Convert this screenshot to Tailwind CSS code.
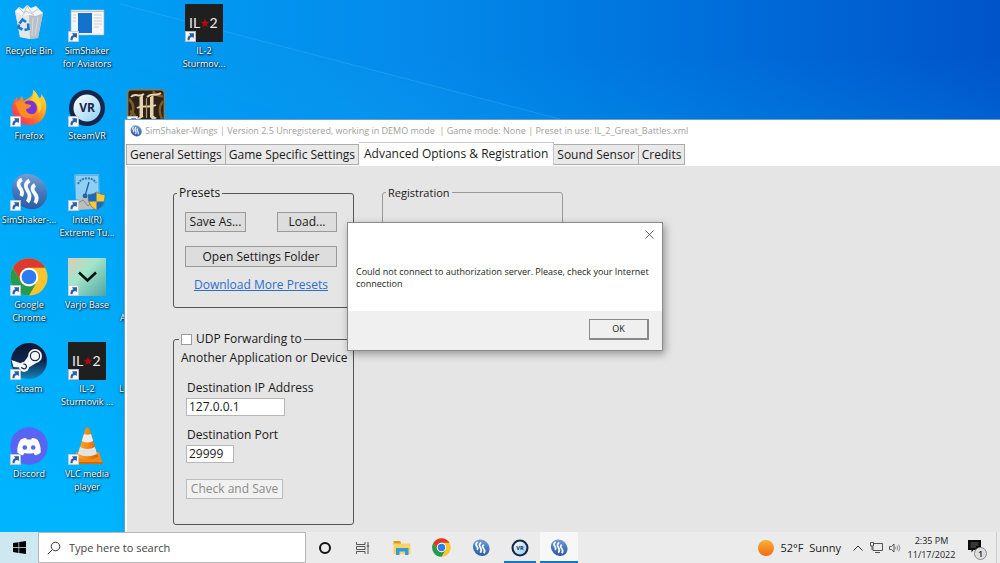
<!DOCTYPE html>
<html lang="en">
<head>
    <meta charset="UTF-8">
    <meta name="viewport" content="width=device-width, initial-scale=1.0">
    <title>SimShaker-Wings</title>
    <script src="https://cdn.jsdelivr.net/npm/@tailwindcss/browser@4"></script>
    <style>
        body {
            font-family: 'Open Sans', 'Noto Sans', sans-serif;
        }
        /* Desktop labels need a dark halo to stay readable on the wallpaper */
        .desktop-label {
            text-shadow: 1px 1px 2px #000, 0 0 2px rgba(0, 0, 0, .7);
        }
    </style>
</head>
<body class="relative h-screen overflow-hidden bg-[#00b0fb] text-[#1a1a1a] flex flex-col">

    <!-- Shared icons -->
    <svg class="absolute w-0 h-0" aria-hidden="true">
        <defs>
            <linearGradient id="g-ball" x1="0" y1="0" x2="1" y2="1">
                <stop offset="0" stop-color="#86aede"/><stop offset=".5" stop-color="#4678bd"/><stop offset="1" stop-color="#244e94"/>
            </linearGradient>
            <linearGradient id="g-fox" x1="1" y1="0" x2="0" y2="1">
                <stop offset="0" stop-color="#fff04a"/><stop offset=".35" stop-color="#ffab1f"/><stop offset=".65" stop-color="#ff5b35"/><stop offset="1" stop-color="#e3228c"/>
            </linearGradient>
            <linearGradient id="g-steam" x1="0" y1="0" x2="0" y2="1">
                <stop offset="0" stop-color="#10152e"/><stop offset=".5" stop-color="#0e2650"/><stop offset="1" stop-color="#1486ba"/>
            </linearGradient>
            <linearGradient id="g-varjo" x1="0" y1="0" x2="1" y2="1">
                <stop offset="0" stop-color="#dccbb6"/><stop offset=".4" stop-color="#a3e6ca"/><stop offset="1" stop-color="#4fa5a4"/>
            </linearGradient>
            <linearGradient id="g-sun" x1="0" y1="0" x2="0" y2="1">
                <stop offset="0" stop-color="#fbb034"/><stop offset="1" stop-color="#f26a12"/>
            </linearGradient>
            <linearGradient id="g-cone" x1="0" y1="0" x2="1" y2="0">
                <stop offset="0" stop-color="#ffa63a"/><stop offset=".5" stop-color="#f78a12"/><stop offset="1" stop-color="#d95f04"/>
            </linearGradient>
            <linearGradient id="g-vr" x1="0" y1="0" x2="1" y2="1">
                <stop offset="0" stop-color="#fff"/><stop offset="1" stop-color="#8fd0f6"/>
            </linearGradient>
        </defs>
        <symbol id="shortcut" viewBox="0 0 11 11">
            <rect x=".3" y=".3" width="10.400" height="10.400" fill="#f4f7fb" stroke="#b5bfcc" stroke-width=".6"/>
            <path d="M2.600 9.300C2.200 6 3.300 4.400 5.300 4.200L4 2.300 9 2.200 8.800 7.100 7.200 5.900C5.200 6.100 4.500 7 4.600 9.300Z" fill="#2b5fa5"/>
        </symbol>
        <symbol id="ball" viewBox="0 0 38 38">
            <ellipse cx="19.500" cy="18.500" rx="18.700" ry="16.500" transform="rotate(45 19.500 18.500)" fill="url(#g-ball)"/>
            <g fill="none" stroke="#f5f8fc" stroke-width="3.800">
                <path d="M12 6.500C8 8 7.500 12 10 15S13 20 11 23"/>
                <path d="M19.500 7.500C15 10 15 14 17.500 17.500S20.500 25 17.500 29"/>
                <path d="M25 12C21.500 14 22 17 24.500 20S28 26 25 30"/>
            </g>
        </symbol>
        <symbol id="chrome" viewBox="0 0 48 48">
            <circle cx="24" cy="24" r="23.500" fill="#f9c52c"/>
            <path d="M3.700 12.200A23.500 23.500 0 0 1 44.400 12.200H24A11.800 11.800 0 0 0 13.800 29.900Z" fill="#dd3a2d"/>
            <path d="M3.700 12.200A23.500 23.500 0 0 0 24 47.500L34.200 29.900A11.800 11.800 0 0 1 13.800 29.900Z" fill="#249b4d"/>
            <circle cx="24" cy="24" r="11.700" fill="#fff"/>
            <circle cx="24" cy="24" r="9.300" fill="#2d7cf0"/>
        </symbol>
        <symbol id="steamvr" viewBox="0 0 38 38">
            <circle cx="19" cy="19" r="18" fill="#14264a"/>
            <circle cx="19" cy="19" r="13.500" fill="url(#g-vr)"/>
            <text x="19" y="23.300" text-anchor="middle" font-size="12" font-weight="700" fill="#14264a" font-family="Open Sans, sans-serif">VR</text>
        </symbol>
        <symbol id="il2" viewBox="0 0 38 38">
            <rect width="38" height="38" fill="#1f1f20"/>
            <g font-family="Lato, sans-serif" font-size="14" fill="#ededed">
                <text x="4" y="24">IL</text>
                <text x="24.500" y="24">2</text>
            </g>
            <path d="M20 14.500 21.200 17.700 24.500 17.800 21.900 19.900 22.800 23.200 20 21.300 17.200 23.200 18.100 19.900 15.500 17.800 18.800 17.700Z" fill="#b4090c"/>
        </symbol>
    </svg>

    <!-- Wallpaper -->
    <div class="absolute inset-0 bg-linear-to-r from-[#00a6f8] via-[#0589ea] via-42% to-[#0054ca]"></div>
    <div class="absolute inset-0 bg-linear-to-t from-[#00b6ff] to-[#00b6ff]/0 to-90%"></div>
    <svg class="absolute inset-0 w-full h-full" viewBox="0 0 1000 563" preserveAspectRatio="none" aria-hidden="true">
        <path d="M120 4 560 119H300L120 60Z" fill="#1aa9f8" opacity=".1"/>
        <path d="M120 4 560 119" stroke="#55bdf8" stroke-width="1" opacity=".3"/>
    </svg>

    <!-- Desktop icons -->
    <main class="relative flex-1 min-h-0">
        <div class="grid grid-flow-col grid-rows-6 grid-cols-[58px_58px_59px_58px] w-max h-[511px] pt-1 text-[9px] leading-[13px] text-white text-center">
            <a href="#" class="flex flex-col items-center gap-0.5">
                <svg class="w-[38px] h-[38px] shrink-0" viewBox="0 0 38 38">
                    <path d="M5 7 15 5 31 8 33 9 28 34 20 35 10 33Z" fill="#cfd5da"/>
                    <path d="M5 7 19 11 20 35 10 33Z" fill="#e2e7eb"/>
                    <path d="M19 11 33 9 28 34 20 35Z" fill="#b9c1c8"/>
                    <path d="M5 7 9 3 13 5 17 1 21 4 26 2 29 5 33 9 26 12 19 11 12 12Z" fill="#f4f5f5"/>
                    <path d="M9 4 14 9 17 2 22 9 28 5M12 12 16 7 24 11" stroke="#b8bec2" stroke-width=".8" fill="none"/>
                    <path d="M23 14 22 32M28 13 25 32" stroke="#d5dadd" stroke-width="1"/>
                    <g fill="none" stroke="#1878d0" stroke-width="2.600">
                        <path d="M9.500 19.500 12.500 15.500 16 18M18 19.500 18.500 25 14.500 26M12.500 25.500 8.500 23.500 9 20.500"/>
                    </g>
                </svg>
                <span class="desktop-label">Recycle Bin</span>
            </a>
            <a href="#" class="col-start-2 row-start-1 flex flex-col items-center gap-0.5">
                <span class="relative shrink-0">
                    <svg class="w-[38px] h-[38px]" viewBox="0 0 38 38">
                        <rect x="3" y="6" width="33" height="25" fill="#f5f5f5" stroke="#a8b3ba" stroke-width=".6"/>
                        <path d="M3 7.500H36" stroke="#bfc4c8"/>
                        <rect x="10" y="9" width="14" height="20" fill="#1272ce"/>
                        <path d="M5 11H8M5 14H8M5 17H8M26 11H34M26 14H34M26 17H34M26 20H34M26 23H31" stroke="#d0d0d0"/>
                    </svg>
                    <svg class="absolute left-0 bottom-0 w-[11px] h-[11px]"><use href="#shortcut"/></svg>
                </span>
                <span class="desktop-label">SimShaker<br>for Aviators</span>
            </a>
            <a href="#" class="col-start-1 row-start-2 flex flex-col items-center gap-0.5">
                <span class="relative shrink-0">
                    <svg class="w-[38px] h-[38px]" viewBox="0 0 38 38">
                        <path d="M23 1C27 4 28 7 29 9 31 9 32 7 31 5 36 10 37 16 36 21 35 30 28 36 19 36 9 36 2 29 2 20 2 15 4 11 7 8L8 12 12 7 14 12C18 9 24 8 23 1Z" fill="url(#g-fox)"/>
                        <circle cx="19.500" cy="19" r="7.500" fill="#7a35d8"/>
                        <path d="M5 14C9 11 14 12 16 15L21 16C21 19 17 20 16 20 16 25 23 27 27 23 25 31 12 31 9 23Z" fill="#ff8b25"/>
                        <path d="M23 1C27 4 28 7 29 9 33 15 32 21 28 24 30 17 25 11 20 11 24 8 24 4 23 1Z" fill="#ffd43a"/>
                    </svg>
                    <svg class="absolute left-0 bottom-0 w-[11px] h-[11px]"><use href="#shortcut"/></svg>
                </span>
                <span class="desktop-label">Firefox</span>
            </a>
            <a href="#" class="col-start-1 row-start-3 flex flex-col items-center gap-0.5">
                <span class="relative shrink-0">
                    <svg class="w-[38px] h-[38px]"><use href="#ball"/></svg>
                    <svg class="absolute left-0 bottom-0 w-[11px] h-[11px]"><use href="#shortcut"/></svg>
                </span>
                <span class="desktop-label">SimShaker-...</span>
            </a>
            <a href="#" class="col-start-1 row-start-4 flex flex-col items-center gap-0.5">
                <span class="relative shrink-0">
                    <svg class="w-[38px] h-[38px]"><use href="#chrome"/></svg>
                    <svg class="absolute left-0 bottom-0 w-[11px] h-[11px]"><use href="#shortcut"/></svg>
                </span>
                <span class="desktop-label">Google<br>Chrome</span>
            </a>
            <a href="#" class="col-start-1 row-start-5 flex flex-col items-center gap-0.5">
                <span class="relative shrink-0">
                    <svg class="w-[38px] h-[38px]" viewBox="0 0 38 38">
                        <circle cx="19" cy="19" r="18" fill="url(#g-steam)"/>
                        <path d="M1.500 18 12.500 22 18 14.500 27 20.500 18 26 3.500 25Z" fill="#f5f7f9"/>
                        <circle cx="25" cy="14" r="7" fill="#f5f7f9"/>
                        <circle cx="25" cy="14" r="4.600" fill="#f5f7f9" stroke="#122448" stroke-width="1.200"/>
                        <circle cx="14" cy="25" r="5" fill="#f5f7f9"/>
                        <path d="M11 25.500 14 26.800A2.300 2.300 0 1 0 13.500 22.300" fill="none" stroke="#122448" stroke-width="1.200"/>
                    </svg>
                    <svg class="absolute left-0 bottom-0 w-[11px] h-[11px]"><use href="#shortcut"/></svg>
                </span>
                <span class="desktop-label">Steam</span>
            </a>
            <a href="#" class="col-start-1 row-start-6 flex flex-col items-center gap-0.5">
                <span class="relative shrink-0">
                    <svg class="w-[38px] h-[38px]" viewBox="0 0 38 38">
                        <circle cx="19" cy="19" r="18.700" fill="#5865f2"/>
                        <path d="M16 11C13 11.300 11.500 12 10.500 12.800 8 16.500 7 21 7.300 25.500 9 27 11 28 13 28.200L14.500 26C17.500 26.800 20.500 26.800 23.500 26L25 28.200C27.500 27.800 29.500 26.800 30.700 25.500 31 21 30 16.500 27.500 12.800 26 11.800 24.500 11.200 22 11L21.200 12.500H16.800Z" fill="#fff"/>
                        <circle cx="14.800" cy="20.500" r="2.300" fill="#5865f2"/><circle cx="23.200" cy="20.500" r="2.300" fill="#5865f2"/>
                    </svg>
                    <svg class="absolute left-0 bottom-0 w-[11px] h-[11px]"><use href="#shortcut"/></svg>
                </span>
                <span class="desktop-label">Discord</span>
            </a>
            <a href="#" class="col-start-2 row-start-2 flex flex-col items-center gap-0.5">
                <span class="relative shrink-0">
                    <svg class="w-[38px] h-[38px]"><use href="#steamvr"/></svg>
                    <svg class="absolute left-0 bottom-0 w-[11px] h-[11px]"><use href="#shortcut"/></svg>
                </span>
                <span class="desktop-label">SteamVR</span>
            </a>
            <a href="#" class="col-start-2 row-start-3 flex flex-col items-center gap-0.5">
                <span class="relative shrink-0">
                    <svg class="w-[38px] h-[38px]" viewBox="0 0 38 38">
                        <path d="M6 2 8 1H31L32 27 8 29Z" fill="#5fb7e8"/>
                        <path d="M8 3H30V26H8Z" fill="#8fd0f2"/>
                        <path d="M10 11C13 4 24 3 28 10" fill="none" stroke="#2e78ba" stroke-width="2" stroke-dasharray="2 1"/>
                        <path d="M21 9 17 23" stroke="#1b5fa8" stroke-width="1.300"/><circle cx="17" cy="23" r="2.400" fill="#2465ad"/>
                        <path d="M6 28 15 25 28 27 26 36 8 37Z" fill="#bcbdb8"/>
                        <path d="M10 30 15 27 20 33 24 29" stroke="#8b8c89" fill="none"/>
                        <path d="M28.500 19C31 21 34 21.500 37 21.500 37 29 35 34 28.500 37 22 34 20 29 20 21.500 23 21.500 26 21 28.500 19Z" fill="#fcc92c"/>
                        <path d="M28.500 19V28.500H20.500C20 26 20 24 20 21.500 23 21.500 26 21 28.500 19ZM28.500 28.500H36.500C35 33 33 35 28.500 37Z" fill="#1c69bf"/>
                        <path d="M28.500 19C31 21 34 21.500 37 21.500 37 29 35 34 28.500 37 22 34 20 29 20 21.500 23 21.500 26 21 28.500 19Z" fill="none" stroke="#5c6f81" stroke-width=".7"/>
                    </svg>
                    <svg class="absolute left-0 bottom-0 w-[11px] h-[11px]"><use href="#shortcut"/></svg>
                </span>
                <span class="desktop-label">Intel(R)<br>Extreme Tu...</span>
            </a>
            <a href="#" class="col-start-2 row-start-4 flex flex-col items-center gap-0.5">
                <span class="relative shrink-0">
                    <svg class="w-[38px] h-[38px]" viewBox="0 0 38 38">
                        <rect width="38" height="38" fill="url(#g-varjo)"/>
                        <path d="M11 14.500 19.500 22.500 28 14.500" fill="none" stroke="#0b0f0f" stroke-width="2.500"/>
                    </svg>
                    <svg class="absolute left-0 bottom-0 w-[11px] h-[11px]"><use href="#shortcut"/></svg>
                </span>
                <span class="desktop-label">Varjo Base</span>
            </a>
            <a href="#" class="col-start-2 row-start-5 flex flex-col items-center gap-0.5">
                <span class="relative shrink-0">
                    <svg class="w-[38px] h-[38px]"><use href="#il2"/></svg>
                    <svg class="absolute left-0 bottom-0 w-[11px] h-[11px]"><use href="#shortcut"/></svg>
                </span>
                <span class="desktop-label">IL-2<br>Sturmovik ...</span>
            </a>
            <a href="#" class="col-start-2 row-start-6 flex flex-col items-center gap-0.5">
                <span class="relative shrink-0">
                    <svg class="w-[38px] h-[38px]" viewBox="0 0 38 38">
                        <path d="M8 25H31L35 37H4Z" fill="#f08a1c"/>
                        <path d="M4 35H35V37H4Z" fill="#d76a08"/>
                        <path d="M17.500 1.500Q19.500-.5 21.500 1.500L30 30Q19.500 36 9 30Z" fill="url(#g-cone)"/>
                        <path d="M16 7Q19.500 8.500 23 7L25.200 14Q19.500 17 13.800 14Z" fill="#eceded"/>
                        <path d="M12 20Q19.500 24 27 20L29 27Q19.500 31.500 10 27Z" fill="#e2e3e3"/>
                    </svg>
                    <svg class="absolute left-0 bottom-0 w-[11px] h-[11px]"><use href="#shortcut"/></svg>
                </span>
                <span class="desktop-label">VLC media<br>player</span>
            </a>
            <a href="#" aria-label="Game" class="col-start-3 row-start-2 flex flex-col items-center">
                <span class="relative shrink-0">
                    <svg class="w-[38px] h-[38px]" viewBox="0 0 38 38">
                        <rect x=".7" y=".7" width="36.600" height="36.600" rx="4" fill="#2d2217" stroke="#8f7c4e" stroke-width="1.400"/>
                        <path d="M2 10Q10 18 3 28M36 12Q30 20 35 30M26 2Q30 8 36 7M3 22Q8 24 10 33" stroke="#7d5a27" stroke-width="2.500" fill="none"/>
                        <path d="M12.500 8 16 6V27L12.500 30ZM23 8 26.500 6V27L30 29 26 31 23 28Z" fill="#e6d3ae"/>
                        <path d="M4 8C8 3 12 9 17 5M20 8C25 3 29 8 34 4M9 31 16 27M10 19C16 15 22 20 29 16" stroke="#e6d3ae" stroke-width="2" fill="none"/>
                        <path d="M19.500 9V29" stroke="#b79a68" stroke-width="1.200"/>
                    </svg>
                    <svg class="absolute left-0 bottom-0 w-[11px] h-[11px]"><use href="#shortcut"/></svg>
                </span>
            </a>
            <span class="desktop-label col-start-3 row-start-4 pt-[53px] pl-1 text-left">A</span>
            <span class="desktop-label col-start-3 row-start-5 pt-10 pl-[3px] text-left">L</span>
            <a href="#" class="col-start-4 row-start-1 flex flex-col items-center gap-0.5">
                <span class="relative shrink-0">
                    <svg class="w-[38px] h-[38px]"><use href="#il2"/></svg>
                    <svg class="absolute left-0 bottom-0 w-[11px] h-[11px]"><use href="#shortcut"/></svg>
                </span>
                <span class="desktop-label">IL-2<br>Sturmov...</span>
            </a>
        </div>

        <!-- SimShaker window -->
        <section class="absolute left-[124px] top-[119px] right-0 bottom-0 flex flex-col bg-white border-l border-t border-[#6b9fc4] shadow-lg">
            <header class="flex items-center h-[22px] pl-[5px] gap-[3px] text-[9px] text-[#a0a0a0] whitespace-pre">
                <svg class="w-3 h-3 shrink-0"><use href="#ball"/></svg>
                <h1>SimShaker-Wings | Version 2.5 Unregistered, working in DEMO mode  | Game mode: None | Preset in use: IL_2_Great_Battles.xml</h1>
            </header>
            <nav class="flex items-end h-[23px] pl-px text-[12px] leading-5 whitespace-nowrap" role="tablist">
                <button role="tab" class="h-[21px] px-[3px] border border-[#acacac] bg-[#e9e9e9]">General Settings</button>
                <button role="tab" class="h-[21px] px-[3px] border border-l-0 border-[#acacac] bg-[#e9e9e9]">Game Specific Settings</button>
                <button role="tab" aria-selected="true" class="h-[23px] px-[5px] border-t border-r border-[#c8c8c8] bg-white">Advanced Options &amp; Registration</button>
                <button role="tab" class="h-[21px] px-[3px] border border-l-0 border-[#acacac] bg-[#e9e9e9]">Sound Sensor</button>
                <button role="tab" class="h-[21px] px-[3px] border border-l-0 border-[#acacac] bg-[#e9e9e9]">Credits</button>
            </nav>
            <div class="flex-1 flex items-start gap-7 ml-0.5 mt-px pl-[46px] pt-[18px] bg-[#e5e5e5] text-[12px] leading-[18px]">
                <div class="w-[181px] flex flex-col gap-[22px]">
                    <fieldset class="min-w-0 h-[124px] px-[11px] border border-[#555] rounded-[3px]">
                        <legend class="-ml-2 px-0.5">Presets</legend>
                        <div class="flex justify-between pt-2.5">
                            <button class="w-[61px] h-5 border border-[#9a9a9a] bg-[#dddddd]">Save As...</button>
                            <button class="w-[60px] h-5 mr-[5px] border border-[#9a9a9a] bg-[#dddddd]">Load...</button>
                        </div>
                        <button class="block w-[152px] h-[21px] mt-[14px] border border-[#9a9a9a] bg-[#dddddd]">Open Settings Folder</button>
                        <a href="#" class="block w-[152px] mt-[9px] text-center text-[#2a70cc] underline">Download More Presets</a>
                    </fieldset>
                    <fieldset class="min-w-0 h-[195px] px-3 border border-[#555] rounded-[3px]">
                        <legend class="-ml-[7px] px-0.5">
                            <label class="flex items-center gap-1"><input type="checkbox" class="appearance-none w-[11px] h-[11px] border border-[#999] bg-white">UDP Forwarding to</label>
                        </legend>
                        <p class="-ml-[5px] pt-px whitespace-nowrap">Another Application or Device</p>
                        <label for="ip" class="block mt-3 ml-px">Destination IP Address</label>
                        <input id="ip" type="text" value="127.0.0.1" class="block w-[99px] h-[18px] mt-px px-0.5 border border-[#b5b8bb] bg-white">
                        <label for="port" class="block mt-2.5 ml-px">Destination Port</label>
                        <input id="port" type="text" value="29999" class="block w-12 h-[18px] mt-px px-0.5 border border-[#b5b8bb] bg-white">
                        <button disabled class="block w-[97px] h-5 mt-4 border border-[#b9bdc0] bg-[#f1f1f1] text-[#8a8a8a]">Check and Save</button>
                    </fieldset>
                </div>
                <fieldset class="min-w-0 w-[181px] h-[123px] px-[11px] border border-[#999] rounded-[3px]">
                    <legend class="-ml-2 px-0.5 text-[11px] leading-[17px]">Registration</legend>
                </fieldset>
            </div>
        </section>

        <!-- Message box -->
        <div role="alertdialog" aria-describedby="msg" class="absolute left-[347px] top-[222px] w-[316px] h-[129px] flex flex-col bg-white border border-[#8a8a8a] shadow-[2px_3px_8px_rgba(0,0,0,0.35)]">
            <button aria-label="Close" class="self-end w-[26px] h-[22px] flex items-center justify-center">
                <svg class="w-[9px] h-[9px]" viewBox="0 0 9 9"><path d="M.5.5 8.500 8.500M8.500.5.5 8.500" stroke="#555" stroke-width=".9"/></svg>
            </button>
            <p id="msg" class="flex-1 px-2 pt-[21px] text-[9px] leading-3 text-[#222]">Could not connect to authorization server. Please, check your Internet connection</p>
            <div class="flex justify-end h-[39px] pt-2 pr-[13px] bg-[#f0f0f0]">
                <button class="w-[60px] h-[21px] border border-r-2 border-b-2 border-[#8a8a8a] text-[9px]">OK</button>
            </div>
        </div>
    </main>

    <!-- Taskbar -->
    <footer class="relative flex h-[31px] bg-[#ebebeb] text-[#222]">
        <button aria-label="Start" class="w-[38px] flex items-center justify-center bg-[#cfe7f0]">
            <svg class="w-[13px] h-[13px]" viewBox="0 0 13 13"><path d="M0 2 5.500 1.200V6.200H0ZM6.200 1.100 13 0V6.200H6.200ZM0 6.900H5.500V11.900L0 11.100ZM6.200 6.900H13V13L6.200 12Z" fill="#000"/></svg>
        </button>
        <label class="flex items-center gap-2 w-[268px] pl-2 bg-white border border-[#b8b8b8]">
            <svg class="w-[14px] h-[14px] shrink-0" viewBox="0 0 14 14"><circle cx="8.500" cy="5.500" r="4.300" fill="none" stroke="#333"/><path d="M5.300 8.700.8 13.200" stroke="#333"/></svg>
            <input type="search" aria-label="Search" placeholder="Type here to search" class="w-full pt-px text-[11px] outline-none placeholder:text-[#444]">
        </label>
        <nav class="flex">
            <button aria-label="Cortana" class="w-[38px] flex items-center justify-center"><span class="w-3 h-3 rounded-full border-2 border-[#111]"></span></button>
            <button aria-label="Task view" class="w-[38px] flex items-center justify-center">
                <svg class="w-[14px] h-3" viewBox="0 0 14 12"><path d="M.5 0V2.500H9V0M.5 12V9.500H9V12M.5 4.500H9V7.500H.5ZM12 0V12M10.800 4H13.200" fill="none" stroke="#444" stroke-width=".9"/></svg>
            </button>
            <button aria-label="File Explorer" class="w-10 flex items-center justify-center">
                <svg class="w-[18px] h-4" viewBox="0 0 18 16"><path d="M.5 1H7L8 2.500V5H.5Z" fill="#d99c1c"/><path d="M.5 3.500H17.500V14H.5Z" fill="#fcd266"/><path d="M3 8H15.500V15H12V11.500H6.500V15H3Z" fill="#3599dd"/></svg>
            </button>
            <button aria-label="Google Chrome" class="w-[39px] flex items-center justify-center"><svg class="w-[19px] h-[19px]"><use href="#chrome"/></svg></button>
            <button aria-label="SimShaker" class="w-[39px] flex items-center justify-center"><svg class="w-[18px] h-[18px]"><use href="#ball"/></svg></button>
            <button aria-label="SteamVR" class="w-8 ml-1 mr-[3px] pt-0.5 flex items-center justify-center border-b-2 border-[#1577c8]"><svg class="w-[18px] h-[18px]"><use href="#steamvr"/></svg></button>
            <button aria-label="SimShaker-Wings" class="w-[38px] ml-px pt-0.5 flex items-center justify-center border-b-2 border-[#1577c8] bg-[#f7f7f7]"><svg class="w-[18px] h-[18px]"><use href="#ball"/></svg></button>
        </nav>
        <div class="ml-auto mr-[3px] pr-[15px] flex items-center border-r border-[#ccc]">
            <button class="flex items-center gap-[7px] text-[11px] mr-3 pt-px whitespace-pre"><svg class="w-4 h-4" viewBox="0 0 16 16"><circle cx="8" cy="8" r="8" fill="url(#g-sun)"/></svg>52°F  Sunny</button>
            <button aria-label="Show hidden icons" class="mr-[7px]"><svg class="w-2.5 h-1.5" viewBox="0 0 10 6"><path d="M.5 5.500 5 1 9.500 5.500" fill="none" stroke="#333"/></svg></button>
            <button aria-label="Network" class="mr-1.5"><svg class="w-[13px] h-[11px]" viewBox="0 0 13 11"><path d="M4 1.500H12.500V8.500H3V5M5 10.500H10M.5.500H3.500V4H.5ZM2 4V8" fill="none" stroke="#444" stroke-width=".9"/></svg></button>
            <button aria-label="Volume" class="mr-1.5"><svg class="w-3 h-2.5" viewBox="0 0 12 10"><path d="M.5 3.500H2.500L5 1V9L2.500 6.500H.5Z" fill="none" stroke="#444" stroke-width=".9"/><path d="M6.500 4Q7.200 5 6.500 6M8 2.700Q9.500 5 8 7.300M9.700 1.500Q12 5 9.700 8.500" fill="none" stroke="#777" stroke-width=".8"/></svg></button>
            <time class="w-[49px] mr-3 text-[9px] leading-[14px] text-center">2:35 PM<br>11/17/2022</time>
            <button aria-label="1 notification" class="relative w-[13px] h-4 flex items-start">
                <svg class="w-[13px] h-[13px]" viewBox="0 0 13 13"><path d="M0 0H13V10H5.500L3.500 12.500V10H0Z" fill="#0b0b0b"/><path d="M2.500 3H10.500M2.500 5H10.500M2.500 7H8" stroke="#888" stroke-width=".7"/></svg>
                <span class="absolute -right-[6px] -bottom-1 w-[13px] h-[13px] rounded-full border border-[#888] bg-[#dedede] text-[9px] leading-[11px] font-semibold text-center">1</span>
            </button>
        </div>
    </footer>

</body>
</html>
